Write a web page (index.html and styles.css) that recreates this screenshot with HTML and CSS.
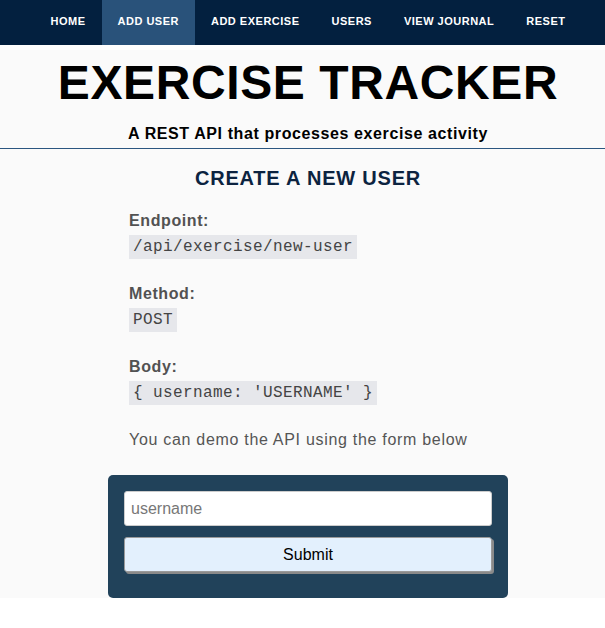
FILE: index.html
```html
<!DOCTYPE html>
<html lang="en">
<head>
<meta charset="utf-8">
<title>Exercise Tracker</title>
<link rel="stylesheet" href="styles.css">
</head>
<body>
<nav class="topnav">
  <a class="navlink" href="#">HOME</a>
  <a class="navlink active" href="#">ADD USER</a>
  <a class="navlink" href="#">ADD EXERCISE</a>
  <a class="navlink" href="#">USERS</a>
  <a class="navlink" href="#">VIEW JOURNAL</a>
  <a class="navlink" href="#">RESET</a>
</nav>
<main class="page">
  <header class="masthead">
    <h1 class="title">EXERCISE TRACKER</h1>
    <p class="tagline">A REST API that processes exercise activity</p>
  </header>
  <section class="content">
    <div class="panel">
      <h2 class="section-title">CREATE A NEW USER</h2>
      <div class="doc">
        <div class="field">
          <div class="field-label">Endpoint:</div>
          <code class="code">/api/exercise/new-user</code>
        </div>
        <div class="field">
          <div class="field-label">Method:</div>
          <code class="code">POST</code>
        </div>
        <div class="field">
          <div class="field-label">Body:</div>
          <code class="code">{ username: 'USERNAME' }</code>
        </div>
        <p class="hint">You can demo the API using the form below</p>
      </div>
      <form class="demo-form" onsubmit="return false;">
        <input class="text-input" type="text" placeholder="username">
        <button class="submit-button" type="submit">Submit</button>
      </form>
    </div>
  </section>
</main>
</body>
</html>
```

FILE: styles.css
```css
body {
  margin: 0;
  background: #ffffff;
  font-family: "Liberation Sans", Arial, Helvetica, sans-serif;
  letter-spacing: 0.6px;
  color: #000000;
}

.topnav {
  display: flex;
  justify-content: center;
  height: 45px;
  padding-left: 11px;
  margin-bottom: 5px;
  background: #03203f;
}

.navlink {
  display: block;
  padding: 0 16px;
  line-height: 43px;
  font-size: 11px;
  font-weight: bold;
  letter-spacing: 0.5px;
  color: #ffffff;
  text-decoration: none;
}

.navlink.active {
  background: #29527a;
}

.page {
  background: #fafafa;
}

.masthead {
  padding: 5px 0 4px 11px;
  text-align: center;
  border-bottom: 1px solid #2b5680;
}

.title {
  margin: 0;
  font-size: 48px;
  line-height: 56px;
  font-weight: bold;
  color: #000000;
}

.tagline {
  margin: 13px 0 0;
  font-size: 16px;
  line-height: 20px;
  font-weight: bold;
  color: #000000;
}

.content {
  padding-left: 11px;
}

.panel {
  width: 400px;
  margin: 0 auto;
}

.section-title {
  margin: 17px 0 0;
  font-size: 20px;
  line-height: 24px;
  font-weight: bold;
  letter-spacing: 0.8px;
  color: #0c2340;
  text-align: center;
}

.doc {
  padding: 21px 21px 0;
}

.field {
  margin-bottom: 25px;
}

.field-label {
  margin-bottom: 4px;
  font-size: 16px;
  line-height: 20px;
  font-weight: bold;
  color: #525252;
}

.code {
  display: inline-block;
  padding: 0 4px;
  font-family: "Liberation Mono", "Courier New", monospace;
  font-size: 16px;
  line-height: 24px;
  letter-spacing: 0.4px;
  background: #e6e7eb;
  color: #444444;
}

.hint {
  margin: 0 0 25px;
  font-size: 16px;
  line-height: 20px;
  letter-spacing: 0.7px;
  color: #555555;
}

.demo-form {
  display: flex;
  flex-direction: column;
  gap: 11px;
  margin: 0;
  padding: 16px 16px 26px;
  background: #21425a;
  border-radius: 5px;
}

.text-input {
  box-sizing: border-box;
  height: 35px;
  margin: 0;
  padding: 0 6px;
  border: 1px solid #cccccc;
  border-radius: 3px;
  background: #ffffff;
  font-family: "Liberation Sans", Arial, sans-serif;
  font-size: 16px;
  color: #000000;
}

.text-input::placeholder {
  color: #777777;
}

.submit-button {
  box-sizing: border-box;
  height: 35px;
  margin: 0;
  padding: 0;
  border: 1px solid #9a9a9a;
  border-radius: 3px;
  background: #e3f0fd;
  box-shadow: 2px 2px 0 #8a8a8a;
  font-family: "Liberation Sans", Arial, sans-serif;
  font-size: 16px;
  color: #000000;
}
```
